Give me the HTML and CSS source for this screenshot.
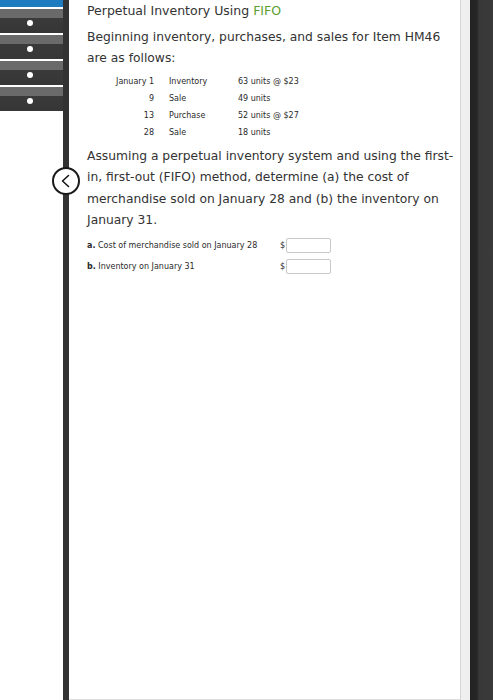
FILE: index.html
```html
<!DOCTYPE html>
<html>
<head>
<meta charset="utf-8">
<link rel="stylesheet" href="styles.css">
</head>
<body>
<div class="page">
  <nav class="sidebar">
    <div class="sidebar-top"></div>
    <div class="nav-item"><span class="dot"></span></div>
    <div class="nav-item"><span class="dot"></span></div>
    <div class="nav-item"><span class="dot"></span></div>
    <div class="nav-item"><span class="dot"></span></div>
  </nav>
  <div class="divider">
    <button class="back-btn" aria-label="Back">
      <svg width="16" height="16" viewBox="0 0 16 16"><path d="M10.5 2.5 L4.5 8 L10.5 13.5" fill="none" stroke="#111" stroke-width="1.5" stroke-linecap="round" stroke-linejoin="round"/></svg>
    </button>
  </div>
  <main class="content">
    <h1 class="title">Perpetual Inventory Using <span class="green">FIFO</span></h1>
    <p class="text intro">Beginning inventory, purchases, and sales for Item HM46 are as follows:</p>
    <div class="ledger">
      <span class="c-date">January 1</span><span>Inventory</span><span>63 units @ $23</span>
      <span class="c-date">9</span><span>Sale</span><span>49 units</span>
      <span class="c-date">13</span><span>Purchase</span><span>52 units @ $27</span>
      <span class="c-date">28</span><span>Sale</span><span>18 units</span>
    </div>
    <p class="text question">Assuming a perpetual inventory system and using the first-in, first-out (FIFO) method, determine (a) the cost of merchandise sold on January 28 and (b) the inventory on January 31.</p>
    <div class="answers">
      <div class="answer-row"><span class="label"><b>a.</b> Cost of merchandise sold on January 28</span><span class="dollar">$</span><span class="input"></span></div>
      <div class="answer-row"><span class="label"><b>b.</b> Inventory on January 31</span><span class="dollar">$</span><span class="input"></span></div>
    </div>
  </main>
  <div class="gutter"></div>
  <div class="rail"></div>
</div>
</body>
</html>
```
FILE: styles.css
```css
html, body { margin: 0; padding: 0; }
body { font-family: "DejaVu Sans", Verdana, sans-serif; color: #333; background: #fff; }
.page { display: flex; height: 700px; width: 493px; overflow: hidden; }
.sidebar { width: 63px; flex: none; display: flex; flex-direction: column; background: #fff; }
.sidebar-top { height: 7px; background: #1f7bc0; }
.nav-item { height: 24px; border-top: 2px solid #fff; background: linear-gradient(#6a6a6a 0, #6a6a6a 9px, #3a3a3a 9px, #363636 100%); position: relative; }
.dot { position: absolute; left: 27px; top: 11px; width: 6px; height: 6px; border-radius: 50%; background: #fff; }
.divider { width: 6px; flex: none; background: #333; position: relative; }
.back-btn { position: absolute; left: -11px; top: 167px; width: 28px; height: 28px; border-radius: 50%; border: 2px solid #1a1a1a; background: #fff; padding: 0; display: flex; align-items: center; justify-content: center; box-sizing: border-box; }
.content { width: 373px; flex: none; padding: 0 0 0 18px; border-right: 1px solid #d6d6d6; border-bottom: 1px solid #dcdcdc; height: 699px; }
.title { font-size: 12.5px; font-weight: normal; margin: 3px 0 0; line-height: 15px; color: #333; }
.green { color: #5a9e32; }
.text { font-size: 12.3px; line-height: 21px; margin: 0; color: #333; }
.intro { margin-top: 9px; }
.ledger { display: grid; grid-template-columns: 45px 54px auto; column-gap: 15px; margin: 4px 0 0 22px; font-size: 8px; line-height: 17px; color: #2a2a2a; }
.c-date { text-align: right; }
.question { margin-top: 5px; line-height: 21.4px; }
.answers { margin-top: 3px; }
.answer-row { display: flex; align-items: center; height: 21px; font-size: 8px; color: #2a2a2a; }
.label { width: 193px; }
.dollar { width: 6px; }
.input { width: 43px; height: 13px; border: 1px solid #c8c8c8; border-radius: 2px; }
.gutter { width: 9px; flex: none; background: #efefef; }
.rail { flex: 1; background: linear-gradient(90deg, #222 0, #262626 7px, #383838 9px, #3a3a3a 100%); }
```
